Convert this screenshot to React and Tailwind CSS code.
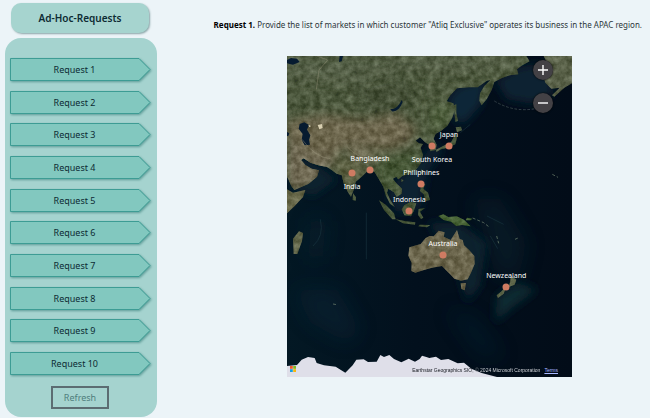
import { useState } from 'react';

const requests = [1, 2, 3, 4, 5, 6, 7, 8, 9, 10];

// x / y are in the map's own 855 x 963 drawing units
const markets = [
  { name: 'Japan', x: 486, y: 269, labelY: 236 },
  { name: 'South Korea', x: 435, y: 271, labelY: 312 },
  { name: 'Bangladesh', x: 249, y: 343, labelY: 310 },
  { name: 'India', x: 195, y: 352, labelY: 393 },
  { name: 'Philiphines', x: 403, y: 385, labelY: 352 },
  { name: 'Indonesia', x: 367, y: 466, labelY: 433 },
  { name: 'Australia', x: 468, y: 598, labelY: 565 },
  { name: 'Newzealand', x: 658, y: 692, labelY: 659 },
];

const place = (x, y) => ({ left: `${(x / 855) * 100}%`, top: `${(y / 963) * 100}%` });

function MapDrawing() {
  return (
    <svg viewBox="0 0 855 963" className="block w-full" aria-hidden="true">
      <defs>
        <filter id="terrain" x="0" y="0" width="100%" height="100%" colorInterpolationFilters="sRGB">
          <feTurbulence type="fractalNoise" baseFrequency="0.05" numOctaves="5" seed="8" result="noise" />
          <feColorMatrix
            in="noise"
            type="matrix"
            values="1 0 0 0 -0.15  1 0 0 0 -0.13  1 0 0 0 -0.22  0 0 0 0 0.32"
            result="tone"
          />
          <feComposite in="tone" in2="SourceGraphic" operator="in" result="cut" />
          <feMerge>
            <feMergeNode in="SourceGraphic" />
            <feMergeNode in="cut" />
          </feMerge>
        </filter>
        <filter id="soft" x="-30%" y="-30%" width="160%" height="160%">
          <feGaussianBlur stdDeviation="14" />
        </filter>
        <filter id="wide" x="-30%" y="-30%" width="160%" height="160%">
          <feGaussianBlur stdDeviation="28" />
        </filter>
        <linearGradient id="ocean" x1="0" y1="0" x2="1" y2="0">
          <stop offset="0" stopColor="#031824" />
          <stop offset="0.45" stopColor="#02101d" />
          <stop offset="1" stopColor="#020c18" />
        </linearGradient>
        <clipPath id="asia">
          <path d="M0 0H718L728 16 702 30 690 40 694 55 668 58 645 66 622 78 614 102 600 128 584 148 577 134 579 112 592 90 610 72 600 74 572 94 545 94 510 97 490 118 479 136 499 142 504 162 495 187 481 209 462 225 446 233 440 248 449 266 446 282 430 286 426 266 414 259 399 244 386 254 396 262 408 264 401 275 408 297 402 322 386 342 365 355 346 359 334 370 328 362 317 368 329 383 345 398 344 413 329 423 321 409 304 398 300 410 308 428 323 453 309 443 296 418 289 392 275 368 262 347 244 343 224 362 206 377 200 402 192 423 182 407 170 382 164 357 149 353 134 342 120 333 94 328 70 320 50 307 42 312 55 327 74 338 96 343 90 362 65 383 22 402 13 390 4 370 0 362Z" />
        </clipPath>
      </defs>

      <rect width="855" height="963" fill="url(#ocean)" />

      {/* shallow seas */}
      <g filter="url(#soft)">
        <path d="M480 130L515 90 600 70 580 150 530 205 500 190Z" fill="#0b2638" />
        <path d="M625 75L700 30 790 20 800 115 740 145 660 130Z" fill="#0a2233" />
        <path d="M340 360L410 300 440 260 470 280 420 350 400 460 330 470 300 420Z" fill="#082430" />
        <path d="M420 500L520 500 600 560 580 690 540 740 500 600Z" fill="#07222d" />
        <path d="M630 720L690 680 750 700 670 760 625 800Z" fill="#0b2a33" />
        <path d="M30 300L100 335 150 370 80 420 20 400Z" fill="#08232f" />
      </g>
      <g filter="url(#wide)" opacity="0.45">
        <path d="M560 430L640 430 720 560 690 680 620 640Z" fill="#0a2833" />
        <path d="M20 700L150 700 220 820 180 860 70 800Z" fill="#082638" />
        <path d="M70 480L120 500 110 600 60 610Z" fill="#0a2834" />
        <path d="M480 760L560 780 650 900 580 900Z" fill="#052033" />
      </g>
      <g fill="none" stroke="#20404a" strokeWidth="3" opacity="0.45">
        <path d="M238 470V610M100 490Q112 540 78 570M610 540L632 578M520 230L550 205M600 480L650 505" />
        <path d="M622 135Q680 170 745 158L790 140" stroke="#6d7c7c" strokeDasharray="8 5" />
      </g>

      {/* Eurasia */}
      <g filter="url(#terrain)">
        <g clipPath="url(#asia)">
          <rect width="855" height="480" fill="#48563a" />
          <g filter="url(#soft)">
            <path d="M0 195L110 175 230 190 330 175 390 215 370 260 300 285 180 270 110 325 95 390 0 410Z" fill="#74694f" />
            <path d="M0 0H700V30L500 55 350 45 180 80 0 70Z" fill="#536046" />
            <path d="M190 90L320 60 400 110 350 175 250 170Z" fill="#3d4c30" />
            <path d="M140 305L210 310 235 350 190 400 155 370Z" fill="#5b5e3c" />
            <path d="M180 270L280 300 240 318 190 300Z" fill="#8a7e66" />
            <path d="M270 310L400 285 380 350 320 420 270 370Z" fill="#3e522e" />
            <path d="M0 240L70 290 150 300 90 380 0 400Z" fill="#7c705a" />
            <path d="M430 150L500 140 490 200 430 235Z" fill="#4a5e39" />
          </g>
        </g>
      </g>

      {/* lakes and inland seas */}
      <g fill="#061b30">
        <path d="M38 204L52 199 66 207 60 221 70 238 66 252 69 266 53 268 44 251 47 234 35 218Z" />
        <path d="M0 12L12 6 30 8 38 18 18 26 8 24 0 22ZM158 0L168 0 164 16 156 18ZM0 228L7 232 4 240 0 240Z" />
        <path d="M310 160Q332 160 344 132L347 138Q336 168 315 166Z" />
      </g>
      <path d="M92 207L105 204 107 216 97 220ZM64 206L72 210 67 214Z" fill="#d8cfb1" />
      <path d="M45 250Q85 305 130 308M90 0L122 12 96 42 88 100M180 272Q212 308 270 317" fill="none" stroke="#9a967e" strokeWidth="3" opacity="0.4" />

      {/* islands, Africa, Alaska and Oceania */}
      <g filter="url(#terrain)">
        <path d="M0 400L18 410 55 402 48 423 23 450 0 472Z" fill="#6c6a49" />
        <path d="M18 548L36 526 48 531 45 555 31 594 20 594Z" fill="#626647" />
        <path d="M770 0H855V82L832 95 802 122 795 118 818 95 793 98 775 80 764 45 780 20Z" fill="#586047" />
        <path d="M500 148L508 145 508 170 513 195 505 197ZM506 214L522 212 525 223 510 229ZM507 231L510 245 505 265 482 275 462 280 448 288 447 281 474 267 492 259Z" fill="#445638" />
        <path d="M198 412L207 424 206 434 197 432ZM402 340L409 345 406 357ZM342 370L350 372 344 379Z" fill="#495a3b" />
        <path d="M276 433L296 446 321 472 326 490 316 490 291 462ZM326 490L357 496 385 499 384 506 348 502ZM344 460L352 448 371 437 388 442 380 466 372 481 352 478ZM395 459L414 456 399 467 409 485 402 489 393 477ZM404 383L415 384 409 398 423 410 429 432 416 435 410 415 399 405ZM398 506L430 507 420 514 394 511Z" fill="#3f5232" />
        <path d="M454 480L469 475 484 483 509 481 531 491 551 511 525 507 508 510 492 497 470 492ZM540 485L556 488 550 493 536 493Z" fill="#385f27" />
        <path d="M510 522L518 549 527 552 531 568 547 583 562 600 563 624 552 650 542 670 522 674 502 668 488 653 477 643 465 630 435 635 411 642 385 650 373 645 374 621 364 599 367 574 401 564 416 546 428 540 440 541 455 524 473 529 470 542 491 552 502 535ZM521 682L537 681 533 703 523 699Z" fill="#756b50" />
        <path d="M672 659L688 671 683 686 665 693 669 679ZM658 690L650 713 633 726 629 718 642 707Z" fill="#606a4c" />
      </g>
      <path d="M557 486L590 500 609 515M629 540L635 562M684 550L693 546M796 355L813 364M138 744L149 746" fill="none" stroke="#70836f" strokeWidth="3" strokeDasharray="9 6" opacity="0.7" />

      {/* Antarctic ice */}
      <path d="M0 930L30 927 44 911 63 903 83 906 89 921 111 928 146 932 175 950 197 928 208 911 230 910 243 918 269 917 280 897 291 903 307 897 321 909 343 919 365 908 384 917 398 909 405 899 418 903 427 906 447 902 462 912 484 909 512 922 531 920 553 938 584 951 630 963H0Z" fill="#dfdfe9" />
    </svg>
  );
}

export default function App() {
  const [selected, setSelected] = useState(1);

  return (
    <div className="flex min-h-screen bg-[#ecf4f8] font-['Noto_Sans','Open_Sans',sans-serif] text-[#0d2b33]">
      <aside className="flex w-[157px] shrink-0 flex-col pb-px pl-[5px]">
        <h1 className="mt-[3px] mr-2 mb-[5px] ml-1.5 rounded-[10px] bg-[#a6d4cf] text-center text-[10px] leading-[30px] font-semibold shadow-[1px_1px_2px_#8aa5a8]">
          Ad-Hoc-Requests
        </h1>
        <nav className="flex flex-1 flex-col items-center rounded-2xl bg-[#a5d3cf] pt-5 pb-2">
          <div className="flex w-full flex-1 flex-col justify-between gap-1 pr-1.5 pl-[5px]">
            {requests.map((n) => (
              <button
                key={n}
                type="button"
                onClick={() => setSelected(n)}
                className="relative h-[23px] w-full cursor-pointer text-[9px] leading-[23px]"
              >
                <svg
                  viewBox="0 0 141 23"
                  preserveAspectRatio="none"
                  className="absolute inset-0 size-full overflow-visible drop-shadow-[1px_1px_1px_#5d9c97]"
                  aria-hidden="true"
                >
                  <path d="M0.5 0.5H129L140 11.5 129 22.5H0.5Z" fill="#82c8bf" stroke="#3d9c94" />
                </svg>
                <span className="relative block pr-3">Request {n}</span>
              </button>
            ))}
          </div>
          <button
            type="button"
            onClick={() => setSelected(1)}
            className="mt-[11px] mr-0.5 h-[23px] w-[58px] cursor-pointer border-2 border-[#5c6c72] text-[9px] leading-[19px] text-[#4f7e7d]"
          >
            Refresh
          </button>
        </nav>
      </aside>

      <main className="flex min-w-0 flex-1 flex-col">
        <p className="mt-[17px] pr-2 text-right text-[8px] leading-4 text-[#2b3438]">
          <strong className="text-black">Request {selected}.</strong> Provide the list of markets in which customer
          "Atliq Exclusive" operates its business in the APAC region.
        </p>
        <section aria-label="Markets map" className="relative mt-[23px] mr-[78px] ml-[130px] overflow-hidden">
          <MapDrawing />
          {markets.map((m) => (
            <div key={m.name}>
              <span
                className="absolute size-[7px] -translate-x-1/2 -translate-y-1/2 rounded-full bg-[#cf7b62]"
                style={place(m.x, m.y)}
              />
              <span
                className="absolute -translate-x-1/2 -translate-y-1/2 text-[7px] leading-[10px] whitespace-nowrap text-white"
                style={place(m.x, m.labelY)}
              >
                {m.name}
              </span>
            </div>
          ))}
          <div className="absolute top-1 right-[19px] flex flex-col gap-[13px]">
            <button
              type="button"
              aria-label="Zoom in"
              className="flex size-5 items-center justify-center rounded-full bg-[#434145] shadow-[0_0_2px_#000]"
            >
              <svg viewBox="0 0 12 12" className="size-3" stroke="#fff" strokeWidth="1.4">
                <path d="M1 6H11M6 1V11" />
              </svg>
            </button>
            <button
              type="button"
              aria-label="Zoom out"
              className="flex size-5 items-center justify-center rounded-full bg-[#434145] shadow-[0_0_2px_#000]"
            >
              <svg viewBox="0 0 12 12" className="size-3" stroke="#fff" strokeWidth="1.4">
                <path d="M1 6H11" />
              </svg>
            </button>
          </div>
          <svg viewBox="0 0 6 6" className="absolute bottom-[5px] left-[3px] size-[6px]" aria-hidden="true">
            <path d="M0 0H2.8V2.8H0Z" fill="#f0562d" />
            <path d="M3.2 0H6V2.8H3.2Z" fill="#80b91c" />
            <path d="M0 3.2H2.8V6H0Z" fill="#13a1e4" />
            <path d="M3.2 3.2H6V6H3.2Z" fill="#f7b60c" />
          </svg>
          <div className="absolute right-[14px] bottom-[2px] flex gap-1 font-['Liberation_Sans',sans-serif] text-[5px] leading-[9px] whitespace-nowrap">
            <span className="bg-linear-to-r from-[#15181f] from-45% to-[#e4e6ea] to-55% bg-clip-text text-transparent">
              Earthstar Geographics SIO, © 2024 Microsoft Corporation
            </span>
            <a href="#terms" className="text-[#a9b8ff] underline">
              Terms
            </a>
          </div>
        </section>
      </main>
    </div>
  );
}
